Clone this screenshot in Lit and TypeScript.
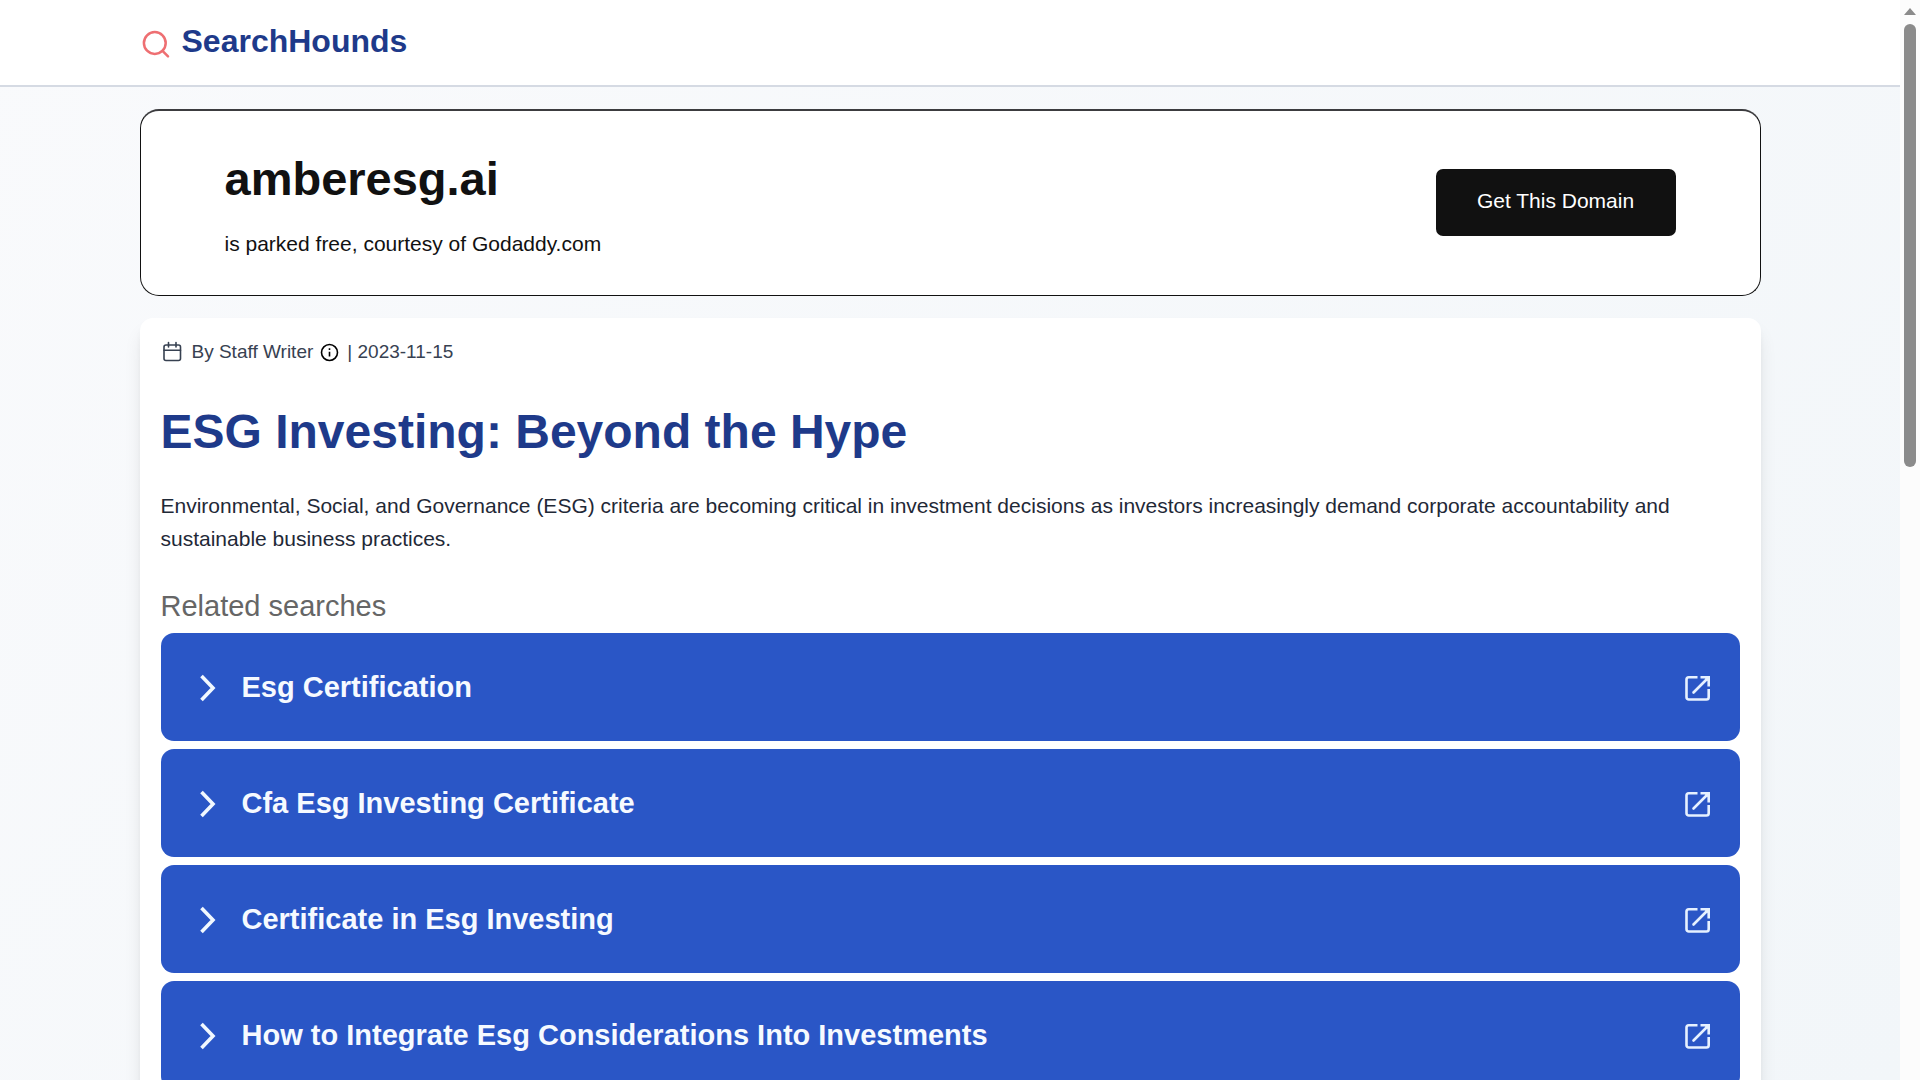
import { LitElement, html, css } from "lit";
import { customElement, property } from "lit/decorators.js";

@customElement("search-link")
class SearchLink extends LitElement {
  @property() label = "";

  static styles = css`
    :host {
      display: block;
    }
    .row {
      display: flex;
      align-items: center;
      gap: 15px;
      min-height: 108px;
      box-sizing: border-box;
      padding: 0 25px 0 28px;
      border-radius: 13px;
      background: #2a56c6;
      color: #f6faff;
      text-decoration: none;
      font-size: 29px;
      font-weight: 700;
    }
    .label {
      flex: 1;
    }
    .chevron,
    .open {
      flex: none;
    }
    .chevron {
      width: 38px;
      height: 38px;
    }
    .open {
      width: 34px;
      height: 34px;
    }
  `;

  render() {
    return html`<a class="row" href="#">
      <svg class="chevron" viewBox="0 0 38 38" fill="none" stroke="#f1f8ff" stroke-width="3.6" aria-hidden="true">
        <path d="M12.5 8 24 20 12.5 32" />
      </svg>
      <span class="label">${this.label}</span>
      <svg class="open" viewBox="0 0 34 34" fill="none" stroke="#e6f1ff" stroke-width="2.6" aria-hidden="true">
        <path d="M16.500 7.300H7.800a2.300 2.300 0 0 0-2.300 2.300V27.200a2.300 2.300 0 0 0 2.300 2.300H25.400a2.300 2.300 0 0 0 2.300-2.300V19" />
        <path d="M12.500 22.500 26.500 8.500" stroke-linecap="round" />
        <path d="M19.500 6H29V16.500H26.400V11L24 8.600H19.500Z" fill="#e6f1ff" stroke="none" />
      </svg>
    </a>`;
  }
}

@customElement("app-root")
class AppRoot extends LitElement {
  private searches = [
    "Esg Certification",
    "Cfa Esg Investing Certificate",
    "Certificate in Esg Investing",
    "How to Integrate Esg Considerations Into Investments",
  ];

  static styles = css`
    :host {
      display: grid;
      grid-template-columns: 1fr 20px;
      height: 100vh;
      overflow: hidden;
      font-family: "Liberation Sans", Arial, sans-serif;
      color: #1f2937;
    }
    .page {
      min-width: 0;
      overflow: hidden;
      background: linear-gradient(135deg, #f9fafc, #f2f6f9);
    }
    .wrap {
      max-width: 1621px;
      margin: 0 auto;
    }
    .header {
      background: #fff;
      border-bottom: 2px solid #d5dae3;
    }
    .brand {
      display: flex;
      align-items: center;
      gap: 9px;
      min-height: 85px;
    }
    .logo {
      width: 33px;
      height: 33px;
      margin-top: 4px;
    }
    .name {
      color: #1e3a8a;
      font-size: 32px;
      font-weight: 700;
      line-height: 44px;
      text-decoration: none;
      padding-bottom: 4px;
    }
    .main {
      display: flex;
      flex-direction: column;
      gap: 22px;
      padding-top: 22px;
    }
    .parked {
      display: flex;
      align-items: center;
      justify-content: space-between;
      box-sizing: border-box;
      min-height: 187px;
      padding: 0 84px;
      border: 1px solid #111;
      border-top: 2px solid #3c3c3f;
      border-radius: 19px;
      background: #fff;
      color: #111;
    }
    .domain {
      margin: 6px 0 22px;
      font-size: 47px;
      line-height: 54px;
    }
    .courtesy {
      margin: 0;
      font-size: 21px;
      line-height: 32px;
    }
    .get {
      box-sizing: border-box;
      width: 240px;
      margin-bottom: 2px;
      padding: 16px 0 19px;
      border-radius: 7px;
      background: #111;
      color: #fff;
      font-size: 21px;
      line-height: 32px;
      text-align: center;
      text-decoration: none;
    }
    .article {
      padding: 21px;
      border-radius: 13px;
      background: #fff;
      box-shadow: 0 13px 20px -4px rgba(0, 0, 0, 0.12), 0 5px 8px -3px rgba(0, 0, 0, 0.06);
    }
    .meta {
      display: flex;
      align-items: center;
      color: #374151;
      font-size: 19px;
      line-height: 26px;
    }
    .calendar {
      width: 22px;
      height: 22px;
      margin-right: 9px;
    }
    .info {
      display: flex;
      margin: 0 8px 0 7px;
      padding: 0;
      border: 0;
      background: none;
      color: #000;
    }
    .infoicon {
      width: 19px;
      height: 19px;
    }
    .title {
      margin: 40px 0 30px;
      color: #1e3a8a;
      font-size: 48px;
      line-height: 54px;
    }
    .lead {
      margin: 0;
      font-size: 21px;
      line-height: 33px;
    }
    .related {
      margin: 33px 0 9px;
      color: #666;
      font-size: 29px;
      font-weight: 400;
      line-height: 36px;
    }
    .list {
      display: flex;
      flex-direction: column;
      gap: 8px;
    }
    .scrollbar {
      display: flex;
      flex-direction: column;
      align-items: center;
      background: #fcfcfc;
    }
    .arrow {
      width: 12px;
      height: 7px;
      margin: 8px 0 9px;
    }
    .thumb {
      width: 12px;
      height: 41%;
      border-radius: 6px;
      background: #8b8b8b;
    }
  `;

  render() {
    return html`
      <div class="page">
        <header class="header">
          <div class="wrap brand">
            <svg class="logo" viewBox="0 0 33 33" fill="none" stroke="#ee6f72" stroke-width="2.500" stroke-linecap="round" aria-hidden="true">
              <circle cx="14.800" cy="15" r="10.900" />
              <path d="M22.500 22.800 28 28.300" />
            </svg>
            <a class="name" href="#">SearchHounds</a>
          </div>
        </header>
        <main class="wrap main">
          <section class="parked">
            <div>
              <h2 class="domain">amberesg.ai</h2>
              <p class="courtesy">is parked free, courtesy of Godaddy.com</p>
            </div>
            <a class="get" href="#">Get This Domain</a>
          </section>
          <article class="article">
            <div class="meta">
              <svg class="calendar" viewBox="0 0 22 22" fill="none" stroke="#374151" stroke-width="1.6" stroke-linecap="round" aria-hidden="true">
                <rect x="3" y="4" width="16.500" height="15.500" rx="2" />
                <path d="M3 9.200H19.500M7.500 1.500V6M15 1.500V6" />
              </svg>
              <span>By Staff Writer</span>
              <button class="info" aria-label="About the author">
                <svg class="infoicon" viewBox="0 0 19 19" fill="none" stroke="currentColor" stroke-width="1.600" aria-hidden="true">
                  <circle cx="9.500" cy="9.500" r="8" />
                  <path d="M9.500 8.700V13.500M9.500 5.300V7" />
                </svg>
              </button>
              <span>| 2023-11-15</span>
            </div>
            <h1 class="title">ESG Investing: Beyond the Hype</h1>
            <p class="lead">
              Environmental, Social, and Governance (ESG) criteria are becoming critical in investment decisions as
              investors increasingly demand corporate accountability and sustainable business practices.
            </p>
            <h2 class="related">Related searches</h2>
            <nav class="list" aria-label="Related searches">
              ${this.searches.map((s) => html`<search-link .label=${s}></search-link>`)}
            </nav>
          </article>
        </main>
      </div>
      <div class="scrollbar" aria-hidden="true">
        <svg class="arrow" viewBox="0 0 12 7"><path d="M6 0 12 7H0Z" fill="#8b8b8b" /></svg>
        <div class="thumb"></div>
      </div>
    `;
  }
}
